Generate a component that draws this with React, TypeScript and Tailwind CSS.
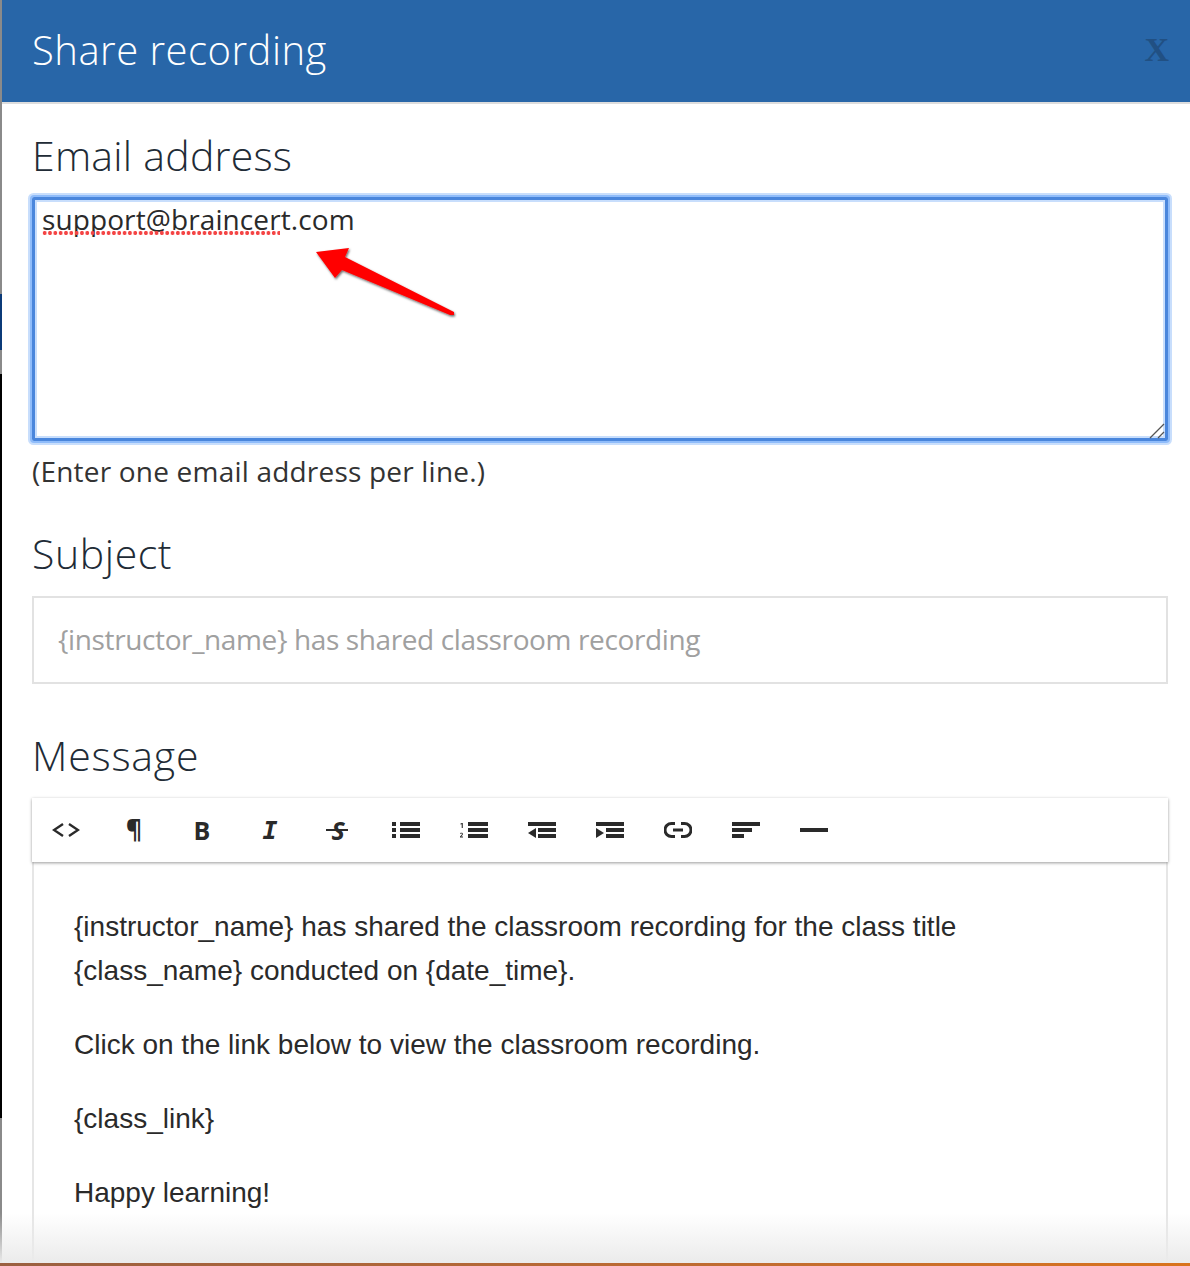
import React from 'react';

const raleway = "font-['Open_Sans',sans-serif]";

const Bars = ({ children }: { children: React.ReactNode }) => (
  <svg width="28" height="16" viewBox="0 0 28 16" fill="#2a2a2a">
    {children}
  </svg>
);

const ToolBtn = ({ children }: { children: React.ReactNode }) => (
  <button className="flex h-16 w-[68px] items-center justify-center text-[#2a2a2a]">{children}</button>
);

const Toolbar = () => (
  <div className="relative z-10 flex h-16 items-center bg-white shadow-[0_1px_3px_rgba(0,0,0,0.4)]">
    <ToolBtn>
      <svg width="28" height="16" viewBox="0 0 28 16" fill="none" stroke="#2a2a2a" strokeWidth="2.4">
        <path d="M11 2 2 8l9 6M17 2l9 6-9 6" />
      </svg>
    </ToolBtn>
    <ToolBtn>
      <span className="-mt-1 font-['Open_Sans',sans-serif] text-[25px] leading-none font-bold">¶</span>
    </ToolBtn>
    <ToolBtn>
      <span className="font-['Open_Sans',sans-serif] text-[25px] leading-none font-bold">B</span>
    </ToolBtn>
    <ToolBtn>
      <span className="font-['DejaVu_Sans_Mono',monospace] text-[25px] leading-none font-bold italic">I</span>
    </ToolBtn>
    <ToolBtn>
      <span className="relative font-['Open_Sans',sans-serif] text-[25px] leading-none font-bold italic">
        S
        <span className="absolute top-[11px] -left-[5px] h-0.5 w-[22px] bg-[#2a2a2a]" />
      </span>
    </ToolBtn>
    <ToolBtn>
      <Bars>
        <rect x="0" y="0" width="4" height="4" />
        <rect x="0" y="6" width="4" height="4" />
        <rect x="0" y="12" width="4" height="4" />
        <rect x="8" y="0" width="20" height="4" />
        <rect x="8" y="6" width="20" height="4" />
        <rect x="8" y="12" width="20" height="4" />
      </Bars>
    </ToolBtn>
    <ToolBtn>
      <Bars>
        <path d="M0.5 1.5 2 1h.8v5H1.7V2.2l-1.2.3zM0 15.5v-1l1.7-1.7c.5-.5.3-1.2-.4-1.2-.4 0-.8.2-1.1.5v-1c.9-.6 2.7-.6 2.7.8 0 .7-.4 1.2-1.8 2.6H3v1z" />
        <rect x="8" y="0" width="20" height="4" />
        <rect x="8" y="6" width="20" height="4" />
        <rect x="8" y="12" width="20" height="4" />
      </Bars>
    </ToolBtn>
    <ToolBtn>
      <Bars>
        <rect x="0" y="0" width="28" height="4" />
        <path d="M8 6v10L0 11z" />
        <rect x="10" y="6" width="18" height="4" />
        <rect x="10" y="12" width="18" height="4" />
      </Bars>
    </ToolBtn>
    <ToolBtn>
      <Bars>
        <rect x="0" y="0" width="28" height="4" />
        <path d="M0 6v10l8-5z" />
        <rect x="10" y="6" width="18" height="4" />
        <rect x="10" y="12" width="18" height="4" />
      </Bars>
    </ToolBtn>
    <ToolBtn>
      <svg width="28" height="16" viewBox="0 0 28 16" fill="none" stroke="#2a2a2a" strokeWidth="3">
        <path d="M11 1.5H7.5a6.5 6.5 0 0 0 0 13H11M17 1.5h3.5a6.5 6.5 0 0 1 0 13H17M9 8h10" />
      </svg>
    </ToolBtn>
    <ToolBtn>
      <Bars>
        <rect x="0" y="0" width="28" height="4" />
        <rect x="0" y="6" width="20" height="4" />
        <rect x="0" y="12" width="12" height="4" />
      </Bars>
    </ToolBtn>
    <ToolBtn>
      <Bars>
        <rect x="0" y="6" width="28" height="4" />
      </Bars>
    </ToolBtn>
  </div>
);

const Arrow = () => (
  <svg className="absolute top-[38px] left-[268px]" width="170" height="90" viewBox="0 0 170 90">
    <defs>
      <filter id="arrowShadow" x="-10%" y="-10%" width="125%" height="130%">
        <feDropShadow dx="1" dy="1.5" stdDeviation="1.2" floodColor="#000" floodOpacity="0.6" />
      </filter>
    </defs>
    <path d="M16 17 49 13 45 22 154 77 154 80 150 80 42 35 35 43Z" fill="#ff0000" filter="url(#arrowShadow)" />
  </svg>
);

export default function App() {
  return (
    <div className="relative h-[1266px] w-[1190px] overflow-hidden bg-white">
      {/* backdrop sliver on the left */}
      <div className="absolute top-0 left-0 flex h-full w-0.5 flex-col">
        <div className="h-[294px] bg-[#8a8a8a]" />
        <div className="h-14 bg-[#0b3a78]" />
        <div className="h-6 bg-[#8a8a8a]" />
        <div className="h-[744px] bg-black" />
        <div className="flex-1 bg-[#8a8a8a]" />
      </div>

      <div className="ml-0.5">
        <header className="flex h-[104px] items-center justify-between border-b-2 border-[#dddddd] bg-[#2866a8] pr-[21px] pb-[2px] pl-[30px]">
          <h1 className={`${raleway} text-[40px] leading-none font-light tracking-[0.5px] text-white`}>Share recording</h1>
          <span className="font-['Liberation_Serif',serif] text-[34px] leading-none font-bold text-[#215083]">X</span>
        </header>

        <main className="pr-[22px] pl-[30px]">
          <label className={`${raleway} mt-[26px] mb-[17px] block text-[41px] leading-[50px] font-light tracking-[0.25px] text-[#212b36]`}>Email address</label>

          <div className="relative">
            <textarea
              readOnly
              spellCheck={false}
              defaultValue="support@braincert.com"
              className={`${raleway} block h-[244px] w-full resize-none rounded-[2px] border-[3px] border-[#4a86dc] px-[7px] pt-[2px] text-[28px] leading-[34px] tracking-[0.1px] text-[#2a2a2a] shadow-[0_0_0_2px_#8fbcfa,0_0_0_4px_#c8defc,inset_0_0_0_2px_#c8defc] outline-none`}
            />
            <div className="absolute top-[33px] left-[10px] h-[6px] w-[238px] bg-[radial-gradient(circle,#f44444_1.7px,transparent_2.3px)] bg-[length:5.33px_6px]" />
            <svg className="absolute right-[3px] bottom-[2px]" width="16" height="16" viewBox="0 0 16 16" stroke="#555555" strokeWidth="1.3">
              <path d="M1 15 15 1M9 15l6-6" />
            </svg>
            <Arrow />
          </div>

          <p className={`${raleway} mt-[13px] text-[28px] leading-[34px] tracking-[0.2px] text-[#333333]`}>(Enter one email address per line.)</p>

          <label className={`${raleway} mt-10 mb-[18px] block text-[41px] leading-[50px] font-light tracking-[0.6px] text-[#212b36]`}>Subject</label>
          <div className={`${raleway} flex h-[88px] items-center border-2 border-[#e2e2e2] pb-[2px] pl-[24px] text-[28px] tracking-[-0.38px] text-[#a0a0a0]`}>
            {'{instructor_name} has shared classroom recording'}
          </div>

          <label className={`${raleway} mt-[46px] mb-[18px] block text-[41px] leading-[50px] font-light tracking-[0.8px] text-[#212b36]`}>Message</label>
          <div>
            <Toolbar />
            <div className="h-[420px] border-x-2 border-[#e6e6e6] px-10 pt-[43px] font-['Liberation_Sans',sans-serif] text-[28px] leading-[44px] text-[#2a2a2a]">
              <p>{'{instructor_name} has shared the classroom recording for the class title {class_name} conducted on {date_time}.'}</p>
              <p className="mt-[30px]">Click on the link below to view the classroom recording.</p>
              <p className="mt-[30px]">{'{class_link}'}</p>
              <p className="mt-[30px]">Happy learning!</p>
            </div>
          </div>
        </main>
      </div>

      {/* fade at the bottom of the scroll area */}
      <div className="absolute right-0 bottom-[3px] left-0 h-[50px] bg-gradient-to-b from-transparent to-[#ebebeb]" />
      <div className="absolute right-0 bottom-0 left-0 h-[3px] bg-gradient-to-r from-[#9a5f40] to-[#d9731c]" />
    </div>
  );
}
